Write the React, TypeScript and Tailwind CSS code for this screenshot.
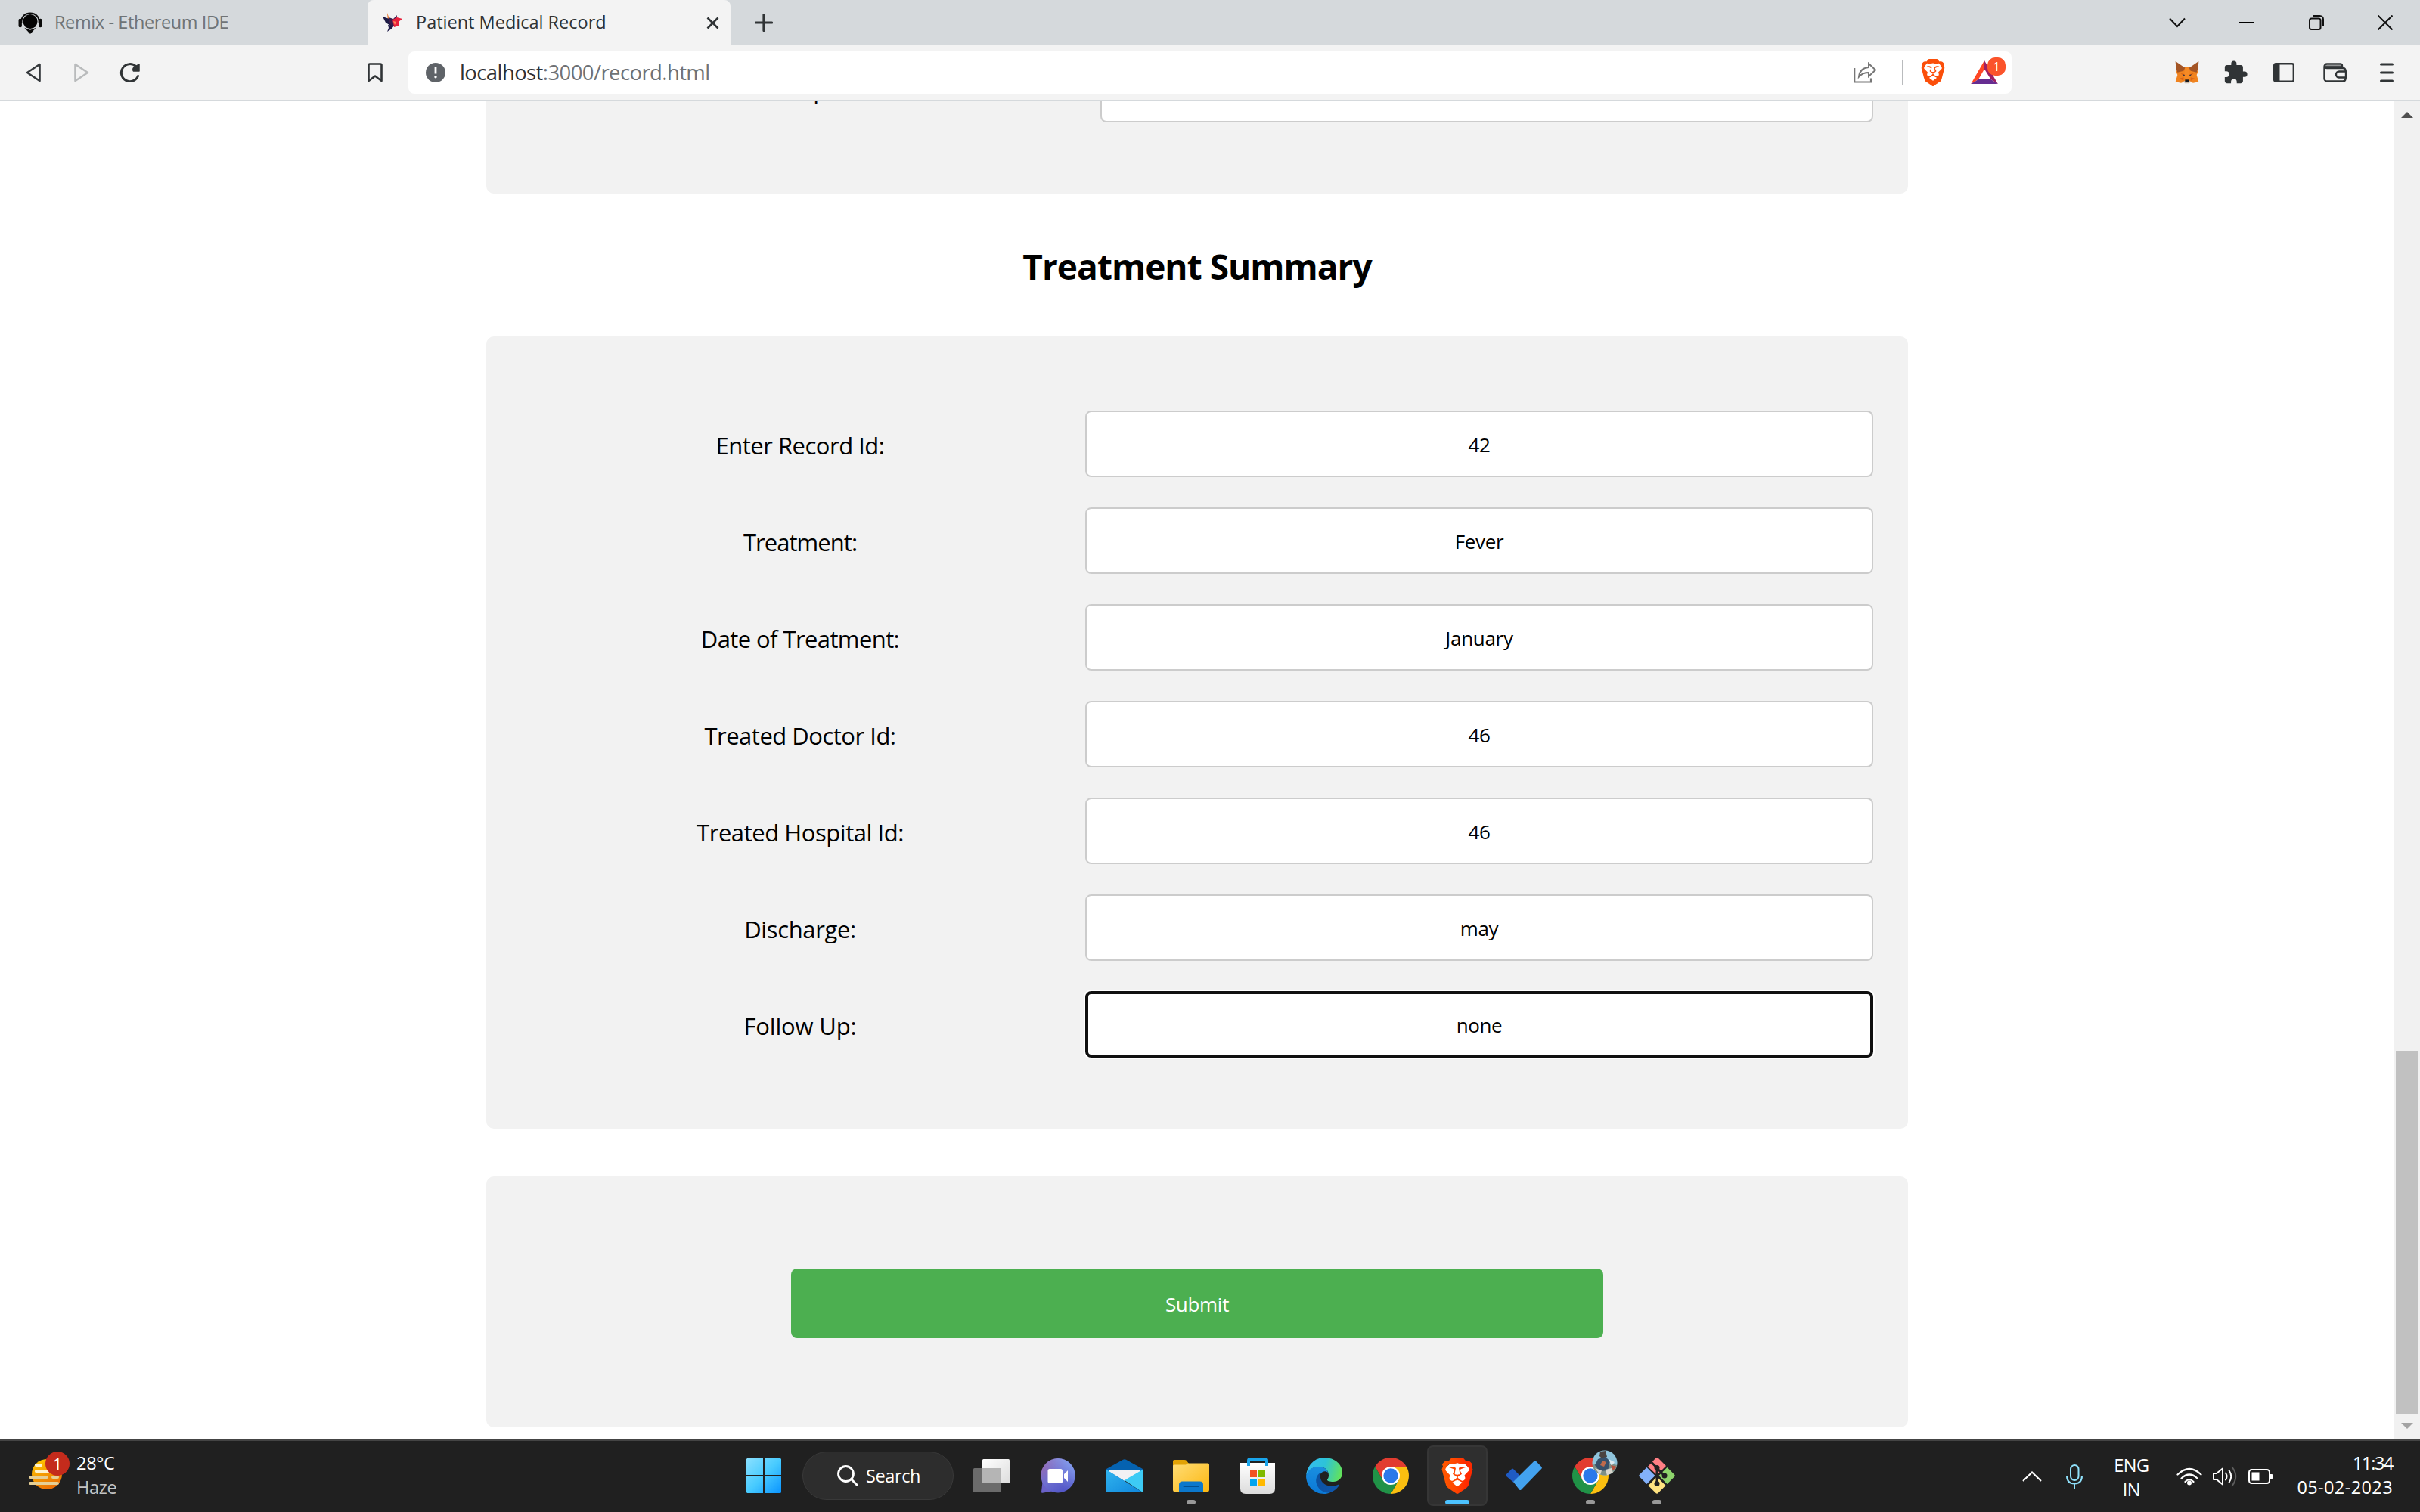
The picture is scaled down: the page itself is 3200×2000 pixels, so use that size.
import type { ReactNode } from "react";
import { SiBrave } from "react-icons/si";
import { MdExtension } from "react-icons/md";

type Field = { label: string; value: string; track: string; focused?: boolean };

const fields: Field[] = [
  { label: "Enter Record Id:", value: "42", track: "tracking-[-0.5px]" },
  { label: "Treatment:", value: "Fever", track: "tracking-[-0.95px]" },
  { label: "Date of Treatment:", value: "January", track: "tracking-[-0.6px]" },
  { label: "Treated Doctor Id:", value: "46", track: "tracking-[-0.5px]" },
  { label: "Treated Hospital Id:", value: "46", track: "tracking-[-0.45px]" },
  { label: "Discharge:", value: "may", track: "tracking-[-0.35px]" },
  { label: "Follow Up:", value: "none", track: "tracking-[-0.15px]", focused: true },
];

/* ---------- tab strip ---------- */

function RemixLogo() {
  return (
    <svg viewBox="0 0 32 30" className="h-[29px] w-8">
      <path d="M4 15V13C4 6 9 1.5 16 1.5S28 6 28 13v2" fill="none" stroke="#0b0b0b" strokeWidth="2" />
      <rect x="0" y="9" width="4.5" height="12" rx="2" fill="#0b0b0b" />
      <rect x="27.5" y="9" width="4.5" height="12" rx="2" fill="#0b0b0b" />
      <circle cx="16" cy="13" r="9.8" fill="#050505" />
      <path d="M8 21.500l8 3 8-3-8 8.500z" fill="#0b0b0b" />
    </svg>
  );
}

function BirdLogo() {
  return (
    <svg viewBox="0 0 26 26" className="h-[26px] w-[26px]">
      <path d="M6 0l3 8-2 3z" fill="#e8762d" />
      <path d="M0 5l12 4 6 8-6 1-8-5z" fill="#1d1b45" />
      <path d="M8 6l6 2 5-5-1 12-6 3-4-6z" fill="#3a1d4e" />
      <path d="M13 9l6-3 7 2-5 4 1 5-7 2z" fill="#e8213c" />
      <path d="M7 16l8 1-3 4-6 4 2-5z" fill="#201c4a" />
      <path d="M14 11l4 1-2 4z" fill="#ff8a5c" />
    </svg>
  );
}

function TabStrip() {
  return (
    <div className="flex h-[60px] items-stretch bg-[#d5d9dc]">
      <div className="flex w-[486px] items-center pl-6">
        <RemixLogo />
        <span className="ml-4 pb-px text-[23.5px] tracking-[-0.4px] text-[#6f7477]">Remix - Ethereum IDE</span>
      </div>
      <div className="flex w-[480px] items-center rounded-t-lg bg-[#f3f3f3] pl-5">
        <BirdLogo />
        <span className="ml-[18px] pb-px text-[23.5px] text-[#2f3336]">Patient Medical Record</span>
        <svg viewBox="0 0 17 17" className="mr-[15px] ml-auto size-[17px]">
          <path d="M1.5 1.5l14 14M15.500 1.500l-14 14" stroke="#303436" strokeWidth="2.600" />
        </svg>
      </div>
      <svg viewBox="0 0 24 24" className="ml-8 size-6 self-center">
        <path d="M12 1.500v21M1.500 12h21" stroke="#303436" strokeWidth="3.200" strokeLinecap="round" />
      </svg>
      <div className="mr-9 ml-auto flex items-center gap-[71.5px]">
        <svg viewBox="0 0 22 14" className="h-[14px] w-[22px]">
          <path d="M1 1.500l10 10.500 10-10.500" fill="none" stroke="#111" strokeWidth="2" />
        </svg>
        <svg viewBox="0 0 20 20" className="size-5">
          <path d="M0 10h20" stroke="#000" strokeWidth="2" />
        </svg>
        <svg viewBox="0 0 20 20" className="size-5">
          <rect x="1" y="4.500" width="14.500" height="14.500" rx="2.500" fill="none" stroke="#111" strokeWidth="2" />
          <path d="M5 1h9.500a4.500 4.500 0 0 1 4.500 4.500V15" fill="none" stroke="#111" strokeWidth="2" />
        </svg>
        <svg viewBox="0 0 20 20" className="size-5">
          <path d="M0.500 0.500l19 19M19.500 0.500l-19 19" stroke="#111" strokeWidth="2" />
        </svg>
      </div>
    </div>
  );
}

/* ---------- toolbar ---------- */

function BraveLion({ className }: { className: string }) {
  return (
    <svg viewBox="0 0 24 24" className={className}>
      <defs>
        <linearGradient id="brave" x1="0" y1="0" x2="1" y2="0">
          <stop offset="0.1" stopColor="#ff5500" />
          <stop offset="0.45" stopColor="#ff4500" />
          <stop offset="0.8" stopColor="#ff2a00" />
        </linearGradient>
      </defs>
      <path d="M3.800 7L7 4.300l5-.8 5 .8L20.200 7l-.7 3-2 6L12 20l-5.500-4-2-6z" fill="#fff" />
      <SiBrave size={24} fill="url(#brave)" />
    </svg>
  );
}

function ShieldsIcon() {
  return (
    <svg viewBox="0 0 24 24" className="ml-[21px] size-9">
      <path d="M3.800 7L7 4.300l5-.8 5 .8L20.200 7l-.7 3-2 6L12 20l-5.500-4-2-6z" fill="#fff" />
      <SiBrave size={24} color="#fb4f0a" />
    </svg>
  );
}

function MetaMaskFox() {
  return (
    <svg viewBox="0 0 96 90" className="h-[30px] w-8">
      <path d="M12 30l24-6h24l24 6 8 12-6 12 8 28-22 4-12-4H36l-12 4-22-4 8-28-6-12z" fill="#f0831f" />
      <path d="M2 0l38 26-6 12-24 6-6-16zM94 0L56 26l6 12 24 6 6-16z" fill="#a35424" />
      <path d="M40 27h16l4 36-12 12-12-12z" fill="#f58a25" />
      <path d="M22 48l16 4v8zM74 48l-16 4v8z" fill="#cf5a17" />
      <path d="M30 52l9 3-3 4zM66 52l-9 3 3 4z" fill="#233447" />
      <path d="M18 68l16-4v14zM78 68l-16-4v14z" fill="#da6518" />
      <path d="M34 78h28l-5 10H39z" fill="#c8b8a8" />
      <path d="M40 73h16v9H40z" fill="#15181d" />
    </svg>
  );
}

function Toolbar() {
  return (
    <div className="flex h-[74px] items-center border-b-2 border-[#d5d9dc] bg-[#f3f3f3]">
      <svg viewBox="0 0 20 26" className="ml-[34px] h-[26px] w-5">
        <path d="M18.500 2v22L2 13z" fill="none" stroke="#35393c" strokeWidth="2.600" strokeLinejoin="round" />
      </svg>
      <svg viewBox="0 0 20 26" className="ml-[44px] h-[26px] w-5">
        <path d="M1.500 2v22L18 13z" fill="none" stroke="#b9bbbc" strokeWidth="2.600" strokeLinejoin="round" />
      </svg>
      <svg viewBox="0 0 28 26" className="ml-10 h-[26px] w-7">
        <path d="M24.500 17.500A11.500 11.500 0 1 1 22 5" fill="none" stroke="#303436" strokeWidth="3" strokeLinecap="round" />
        <path d="M26 2v9h-7.500c-1.500-2-.5-5 1.500-5.500z" fill="#303436" stroke="#303436" strokeWidth="1.500" strokeLinejoin="round" />
      </svg>
      <svg viewBox="0 0 20 26" className="ml-[300px] h-[26px] w-5">
        <path d="M1.500 3q0-1.500 1.500-1.500h14q1.500 0 1.500 1.500v21L10 17.500 1.500 24z" fill="none" stroke="#303436" strokeWidth="2.600" strokeLinejoin="round" />
      </svg>
      <div className="ml-[34px] flex h-14 w-[2120px] items-center rounded-lg bg-white pl-[23px]">
        <svg viewBox="0 0 26 26" className="size-[26px]">
          <circle cx="13" cy="13" r="13" fill="#5f6368" />
          <path d="M13 6v8.500" stroke="#fff" strokeWidth="2.800" />
          <circle cx="13" cy="18.800" r="1.700" fill="#fff" />
        </svg>
        <span className="ml-[19px] text-[27.5px] tracking-[-0.6px] text-[#6f7276]">
          <span className="text-[#303134]">localhost</span>:3000/record.html
        </span>
        <svg viewBox="0 0 30 28" className="mr-[34px] ml-auto h-7 w-[30px]">
          <path d="M1.200 8v18.500H23v-5" fill="none" stroke="#777" strokeWidth="2.200" />
          <path d="M20 2l9 8.500-9 8.500v-5c-6 0-9.500 1.500-13 5.500.8-7 5-12 13-12.500z" fill="none" stroke="#777" strokeWidth="2" />
        </svg>
        <div className="h-8 w-0.5 bg-[#b9bbbd]" />
        <ShieldsIcon />
        <div className="relative mr-2 ml-8 h-8 w-[46px]">
          <svg viewBox="0 0 108 94" className="h-[31px] w-9">
            <path d="M54 0L0 94l30-18 24-42z" fill="#ff4724" />
            <path d="M54 0l54 94-28-18-26-42z" fill="#9e1f63" />
            <path d="M0 94h108L80 76H30z" fill="#662d91" />
          </svg>
          <span className="absolute -top-1 left-[22px] flex h-6 w-6 items-center justify-center rounded-[10px] bg-[#fb542b] pb-px text-[16px] text-white">
            1
          </span>
        </div>
      </div>
      <div className="ml-[216px] flex items-center">
        <MetaMaskFox />
        <MdExtension className="ml-[31px] size-[34px] text-[#303436]" />
        <svg viewBox="0 0 28 26" className="ml-[33px] h-[26px] w-7">
          <rect x="1.200" y="1.200" width="25.600" height="23.600" rx="2" fill="none" stroke="#303436" strokeWidth="2.400" />
          <path d="M1 1h7.500v24H1z" fill="#303436" />
        </svg>
        <svg viewBox="0 0 32 26" className="ml-[38px] h-[26px] w-8">
          <path d="M25 7V4q0-2.500-2.500-2.500H5A3.500 3.500 0 0 0 1.500 5v16A3.500 3.500 0 0 0 5 24.500h21q3.500 0 3.500-3.500V10.500Q29.500 7 26 7H5Q2 7 1.500 4.500" fill="none" stroke="#303436" strokeWidth="2.400" />
          <path d="M30 11.500h-9a4 4 0 0 0 0 8h9z" fill="#f3f3f3" stroke="#303436" strokeWidth="2.400" />
          <path d="M3 4.200h20" stroke="#303436" strokeWidth="1.400" />
        </svg>
        <svg viewBox="0 0 18 26" className="ml-[43px] h-[26px] w-[18px]">
          <path d="M1.500 2h15M1.500 13h15M1.500 24h15" stroke="#303436" strokeWidth="3" strokeLinecap="round" />
        </svg>
      </div>
    </div>
  );
}

/* ---------- page ---------- */

function FormRow({ field }: { field: Field }) {
  return (
    <div className="flex h-[88px] shrink-0 items-center">
      <label className={`flex-1 pt-[5px] text-center text-[31px] text-black ${field.track}`}>{field.label}</label>
      <div
        className={
          field.focused
            ? "flex h-[88px] w-[1042px] items-center justify-center rounded-lg border-4 border-[#101010] bg-white pt-0.5 text-[26px] tracking-[-0.4px] text-black ring-2 ring-white"
            : "flex h-[88px] w-[1042px] items-center justify-center rounded-lg border-2 border-[#ccc] bg-white pt-0.5 text-[26px] tracking-[-0.3px] text-black"
        }
      >
        {field.value}
      </div>
    </div>
  );
}

function Page() {
  return (
    <div className="flex h-[1770px] bg-white">
      <main className="flex w-[3166px] flex-col items-center overflow-hidden">
        <section className="flex h-[122px] w-[1880px] flex-col justify-end overflow-hidden rounded-b-[10px] bg-[#f2f2f2] pr-[46px] pb-[94px] pl-[38px]">
          <div className="flex h-[88px] shrink-0 items-center">
            <span className="flex-1 pt-0.5 text-center text-[31px] tracking-[-0.5px] text-black">Prescription:</span>
            <div className="h-[88px] w-[1022px] rounded-lg border-2 border-[#ccc] bg-white" />
          </div>
        </section>
        <h2 className="flex h-[189px] items-center pt-1 text-[46px] font-bold tracking-[-0.95px] text-black">
          Treatment Summary
        </h2>
        <section className="flex h-[1048px] w-[1880px] flex-col gap-10 rounded-[10px] bg-[#f2f2f2] pt-[98px] pr-[46px] pl-[38px]">
          {fields.map((f) => (
            <FormRow key={f.label} field={f} />
          ))}
        </section>
        <section className="mt-[63px] flex h-[332px] w-[1880px] justify-center rounded-[10px] bg-[#f2f2f2] pt-[122px]">
          <button className="h-[92px] w-[1074px] rounded-lg bg-[#4caf50] pt-0.5 text-[26px] tracking-[-0.3px] text-white">
            Submit
          </button>
        </section>
      </main>
      <div className="flex w-[34px] flex-col items-center bg-[#f1f1f1]">
        <svg viewBox="0 0 16 8" className="mt-[14px] h-2 w-4">
          <path d="M0 8L8 0l8 8z" fill="#505050" />
        </svg>
        <div className="mt-auto h-[480px] w-[30px] bg-[#c1c1c1]" />
        <svg viewBox="0 0 16 8" className="mt-3 mb-[14px] h-2 w-4">
          <path d="M0 0l8 8 8-8z" fill="#a3a3a3" />
        </svg>
      </div>
    </div>
  );
}

/* ---------- taskbar ---------- */

function WindowsLogo() {
  return (
    <svg viewBox="0 0 46 46" className="size-[46px]">
      <defs>
        <linearGradient id="win" x1="0" y1="0" x2="46" y2="46" gradientUnits="userSpaceOnUse">
          <stop offset="0" stopColor="#8ae0ff" />
          <stop offset="0.5" stopColor="#48cbff" />
          <stop offset="1" stopColor="#0a94ff" />
        </linearGradient>
      </defs>
      <path d="M1 0h21v22H0V1zM24 0h21l1 1v21H24zM0 24h22v22H1l-1-1zM24 24h22v21l-1 1H24z" fill="url(#win)" />
    </svg>
  );
}

function TaskView() {
  return (
    <svg viewBox="0 0 48 44" className="h-11 w-12">
      <defs>
        <linearGradient id="tv" x1="0" y1="0" x2="1" y2="1">
          <stop offset="0" stopColor="#fff" />
          <stop offset="1" stopColor="#ddd" />
        </linearGradient>
      </defs>
      <rect x="12" y="0" width="36" height="32" rx="1.500" fill="url(#tv)" />
      <rect x="0" y="12" width="36" height="32" rx="1.500" fill="#6b6b6b" />
      <path d="M12 12h24v20H12z" fill="#b5b5b5" />
    </svg>
  );
}

function ChatIcon() {
  return (
    <svg viewBox="0 0 46 46" className="size-[46px]">
      <defs>
        <linearGradient id="chat" x1="0.1" y1="0.1" x2="0.7" y2="0.9">
          <stop offset="0" stopColor="#9a6bb0" />
          <stop offset="0.5" stopColor="#6f6fd0" />
          <stop offset="1" stopColor="#5458c8" />
        </linearGradient>
        <linearGradient id="chatR" x1="0.3" y1="0.8" x2="1" y2="0.1">
          <stop offset="0.2" stopColor="#7c8be8" stopOpacity="0" />
          <stop offset="1" stopColor="#86a8f2" />
        </linearGradient>
      </defs>
      <path d="M2.500 31L1 44.500q0 1.500 1.500 1.200L15 43.500z" fill="#6a62c8" />
      <circle cx="23" cy="22.700" r="22.700" fill="url(#chat)" />
      <circle cx="23" cy="22.700" r="22.700" fill="url(#chatR)" />
      <rect x="9.500" y="14" width="19.500" height="19" rx="2.500" fill="#fff" />
      <path d="M31 21l5-5v15l-5-5z" fill="#fff" />
    </svg>
  );
}

function MailIcon() {
  return (
    <svg viewBox="0 0 48 44" className="h-11 w-12">
      <defs>
        <linearGradient id="mail" x1="0" y1="0" x2="1" y2="1">
          <stop offset="0" stopColor="#31b4ee" />
          <stop offset="1" stopColor="#0f86dc" />
        </linearGradient>
      </defs>
      <path d="M0 13L22 0.800q2-1.200 4 0L48 13v16H0z" fill="#0562b0" />
      <path d="M4 14h40v3L24 29 4 17z" fill="#f1f1f4" />
      <path d="M48 14v30L24 28z" fill="#3dcbf5" />
      <path d="M0 14l48 30H0z" fill="url(#mail)" />
    </svg>
  );
}

function ExplorerIcon() {
  return (
    <svg viewBox="0 0 48 42" className="h-[42px] w-12">
      <defs>
        <linearGradient id="fold" x1="0" y1="0" x2="1" y2="1">
          <stop offset="0" stopColor="#ffdd76" />
          <stop offset="1" stopColor="#fcb711" />
        </linearGradient>
      </defs>
      <path d="M0 2q0-2 2-2h13q2 0 3 1l3 4v6H0z" fill="#e2a205" />
      <path d="M0 8q0-1.500 1.500-1.500H17L20 4.500h26q2 0 2 2V40q0 2-2 2H2q-2 0-2-2z" fill="url(#fold)" />
      <path d="M8 42V33q0-4.500 4.500-4.500h23Q40 28.500 40 33v9z" fill="#0c78cc" />
      <path d="M14.500 35h19" stroke="#05508f" strokeWidth="2" strokeLinecap="round" />
    </svg>
  );
}

function StoreIcon() {
  return (
    <svg viewBox="0 0 46 48" className="h-12 w-[46px]">
      <defs>
        <linearGradient id="bag" x1="0" y1="0" x2="0" y2="1">
          <stop offset="0" stopColor="#fff" />
          <stop offset="1" stopColor="#dcdcdc" />
        </linearGradient>
      </defs>
      <path d="M0 7h46v34q0 7-7 7H7q-7 0-7-7z" fill="url(#bag)" />
      <path d="M11 11V4q0-2 2-2h20q2 0 2 2v7" fill="none" stroke="#19a5ec" strokeWidth="4" />
      <path d="M13 17h9v9h-9z" fill="#f25022" />
      <path d="M24 17h9v9h-9z" fill="#7fba00" />
      <path d="M13 28h9v9h-9z" fill="#00a4ef" />
      <path d="M24 28h9v9h-9z" fill="#ffb900" />
    </svg>
  );
}

function EdgeIcon() {
  return (
    <svg viewBox="0 0 48 48" className="size-12">
      <defs>
        <linearGradient id="edgeTop" x1="0" y1="0.3" x2="1" y2="0.5">
          <stop offset="0" stopColor="#35bdf1" />
          <stop offset="0.5" stopColor="#2dc3d8" />
          <stop offset="1" stopColor="#62e25c" />
        </linearGradient>
        <linearGradient id="edgeBody" x1="0.4" y1="0" x2="0.3" y2="1">
          <stop offset="0" stopColor="#1a8fe0" />
          <stop offset="1" stopColor="#0a78d6" />
        </linearGradient>
        <linearGradient id="edgeDark" x1="0" y1="0" x2="1" y2="1">
          <stop offset="0" stopColor="#0b4f9c" />
          <stop offset="1" stopColor="#0f58b0" />
        </linearGradient>
      </defs>
      <path d="M0 24C2 9 12 0 24 0c14 0 24 9 24 20 0 8-6 12-12 12-5 0-8-1-8-2.500 0-1 2-2 2-6C30 17 25 12 17 12 9 12 2 17 0 24z" fill="url(#edgeTop)" />
      <path d="M0 24C2 16 9 12 17 12c7 0 11 4 12 8-2-2-5-2-7-1-4 2-6 8-4 15 2 8 10 12 14 12-3 1.500-5 2-8 2C10 48 0 37 0 24z" fill="url(#edgeBody)" />
      <path d="M19 20c-5 3-7 9-5 15 3 9 12 13 18 11 6-2 9-5 11.500-9 .5-1-.5-1.500-1.500-1-9 4-21 1-23-9-.500-3-.500-5 0-7z" fill="url(#edgeDark)" />
    </svg>
  );
}

function ChromeIcon() {
  const wedge = "M44.780 12A24 24 0 0 0 3.220 12L13.600 30 24 12z";
  return (
    <svg viewBox="0 0 48 48" className="size-12">
      <path d={wedge} fill="#e23c30" />
      <path d={wedge} fill="#fbbf10" transform="rotate(120 24 24)" />
      <path d={wedge} fill="#209247" transform="rotate(240 24 24)" />
      <circle cx="24" cy="24" r="12" fill="#fff" />
      <circle cx="24" cy="24" r="9.700" fill="#2b79ea" />
    </svg>
  );
}

function TodoIcon() {
  return (
    <svg viewBox="0 0 48 40" className="h-10 w-12">
      <path d="M0.600 18.600L8 11q1-1 2 0l9 9-9 8.500-9.400-8q-.8-1 0-1.900z" fill="#1f5bc4" />
      <path d="M10 28L37.500 0.800q1.300-1.200 2.600 0l7.300 7.500q1 1.200 0 2.400L20.500 38.500q-1.200 1-2.400 0z" fill="#43a2ef" />
    </svg>
  );
}

function GitIcon() {
  return (
    <svg viewBox="0 0 48 48" className="size-12">
      <path d="M24 0q1 0 2 1l10 10-12 12L12 12 22 1q1-1 2-1z" fill="#ff7f84" />
      <path d="M37.500 13l9.500 9.500q1.500 1.500 0 3L37.500 35 26.500 24z" fill="#8ed46c" />
      <path d="M10.500 13l11 11-11 11L1 25.500q-1.500-1.500 0-3z" fill="#83b1fb" />
      <path d="M24 25.500l11.500 11.500-10 10q-1.500 1.500-3 0l-10-10z" fill="#fee280" />
      <path d="M17 6.500l7 7V35M24 14l10 10" fill="none" stroke="#202020" strokeWidth="3" />
      <circle cx="24" cy="13.500" r="3.500" fill="#202020" />
      <circle cx="34" cy="24" r="3.500" fill="#202020" />
      <circle cx="24" cy="34.500" r="3.500" fill="#202020" />
    </svg>
  );
}

function Avatar() {
  return (
    <svg viewBox="0 0 34 34" className="absolute -top-2.5 left-[46px] size-[34px]">
      <defs>
        <clipPath id="av">
          <circle cx="17" cy="17" r="16.500" />
        </clipPath>
      </defs>
      <g clipPath="url(#av)">
        <path d="M0 0h34v34H0z" fill="#8fc4dc" />
        <path d="M0 20l14-4 20 4v14H0z" fill="#7d8f86" />
        <path d="M11 2l7-1 2 8-6 3-4-4z" fill="#4b4340" />
        <path d="M8 12l10-3 6 6-3 12-11 1-6-8z" fill="#37506b" />
        <path d="M14 14l5 2-3 6-5-2z" fill="#c06a4c" />
        <path d="M22 12l8 4-4 5z" fill="#dfe9ee" />
        <path d="M4 24l9 3-2 6zM18 26l8-2 2 6-8 4z" fill="#d8d6cd" />
        <path d="M25 20l8 2-5 5z" fill="#b8503c" />
      </g>
    </svg>
  );
}

function Slot({ children, dot, active }: { children: ReactNode; dot?: boolean; active?: boolean }) {
  return (
    <div className="relative flex h-20 w-[88px] items-center justify-center">
      {active && (
        <div className="absolute inset-x-1 inset-y-0 flex items-end justify-center rounded-lg border-2 border-[#363636] bg-[#2f2f2f]">
          <div className="h-1.5 w-8 rounded-full bg-[#4cc2ff]" />
        </div>
      )}
      <div className="relative">{children}</div>
      {dot && <div className="absolute bottom-0.5 left-[38px] h-1.5 w-3 rounded-full bg-[#999]" />}
    </div>
  );
}

function Weather() {
  return (
    <div className="flex items-start">
      <div className="relative mt-[3px] h-[52px] w-[63px]">
        <svg viewBox="0 0 44 42" className="absolute top-2 left-0 h-[42px] w-11">
          <defs>
            <linearGradient id="sun" x1="0.2" y1="0" x2="0.7" y2="1">
              <stop offset="0" stopColor="#ffc800" />
              <stop offset="1" stopColor="#ea6a05" />
            </linearGradient>
          </defs>
          <circle cx="24" cy="20" r="20" fill="url(#sun)" />
          <path d="M10 8h6M10 16h16M2 24h22M32 24h6M2 32h36" stroke="#e6cf95" strokeWidth="4" strokeLinecap="round" />
          <path d="M10 8h6M10 16h16" stroke="#fff3cc" strokeWidth="4" strokeLinecap="round" />
        </svg>
        <span className="absolute -top-0.5 left-[22px] flex size-8 items-center justify-center rounded-full bg-[#c42b1c] text-[22px] text-white">
          1
        </span>
      </div>
      <div className="text-[23.5px] leading-8 tracking-[-0.3px]">
        <div className="text-white">28°C</div>
        <div className="text-[#c3c3c3]">Haze</div>
      </div>
    </div>
  );
}

function Tray() {
  return (
    <div className="mr-9 ml-auto flex items-center text-[23.5px] leading-8 text-white">
      <svg viewBox="0 0 26 14" className="h-[14px] w-[26px]">
        <path d="M1 13L13 1.500 25 13" fill="none" stroke="#fff" strokeWidth="2" />
      </svg>
      <svg viewBox="0 0 22 32" className="ml-8 h-8 w-[22px]">
        <rect x="6" y="1" width="10.500" height="20" rx="5.250" fill="none" stroke="#8fe0fa" strokeWidth="2" />
        <path d="M1 15q0 10.500 10 10.500T21 15M11 26v6" fill="none" stroke="#8fe0fa" strokeWidth="2" />
      </svg>
      <div className="ml-[40px] w-12 pt-0.5 text-center tracking-[-0.5px]">
        <div>ENG</div>
        <div>IN</div>
      </div>
      <svg viewBox="0 0 34 24" className="ml-[36px] h-6 w-[34px]">
        <path d="M1.500 9.500q15.500-15 31 0M6.500 14.500q10.500-10 21 0M11.500 19q5.500-5.500 11 0" fill="none" stroke="#fff" strokeWidth="2.200" strokeLinecap="round" />
        <circle cx="17" cy="20.500" r="3" fill="#fff" />
      </svg>
      <svg viewBox="0 0 32 28" className="ml-3.5 h-7 w-8">
        <path d="M1 10h4l8-6.500v21L5 18H1z" fill="none" stroke="#fff" strokeWidth="2" strokeLinejoin="round" />
        <path d="M17 9.500q3 4.500 0 9M21.500 6q5.500 8 0 16" fill="none" stroke="#fff" strokeWidth="2" strokeLinecap="round" />
        <path d="M25.500 1.500q9.500 12.500 0 25" fill="none" stroke="#5c5c5c" strokeWidth="2" strokeLinecap="round" />
      </svg>
      <svg viewBox="0 0 33 20" className="ml-[15px] h-5 w-[33px]">
        <rect x="1" y="1" width="27" height="18" rx="3.500" fill="none" stroke="#fff" strokeWidth="2" />
        <path d="M29 7h2q2 0 2 1.500v3Q33 13 31 13h-2z" fill="#fff" />
        <rect x="4.500" y="4.500" width="10" height="11" fill="#fff" />
      </svg>
      <div className="ml-[31px] pb-[3px] text-right">
        <div className="tracking-[-1.4px]">11:34</div>
        <div className="tracking-[0.4px]">05-02-2023</div>
      </div>
    </div>
  );
}

function Taskbar() {
  return (
    <div className="flex h-24 items-start border-t-2 border-[#444] bg-[#202020]">
      <div className="mt-[13px] w-[966px] pl-[38px]">
        <Weather />
      </div>
      <div className="mt-1.5 flex items-center">
        <Slot>
          <WindowsLogo />
        </Slot>
        <div className="mr-1.5 ml-[7px] flex h-16 w-[200px] items-center rounded-full border border-[#393939] bg-[#2d2d2d] pl-[45px]">
          <svg viewBox="0 0 28 28" className="size-7">
            <circle cx="11.500" cy="11.500" r="10" fill="none" stroke="#fff" strokeWidth="2.800" />
            <path d="M18.500 18.500l8 8" stroke="#fff" strokeWidth="3" strokeLinecap="round" />
          </svg>
          <span className="ml-2.5 pt-0.5 text-[23.5px] tracking-[-0.4px] text-white">Search</span>
        </div>
        <Slot>
          <TaskView />
        </Slot>
        <Slot>
          <ChatIcon />
        </Slot>
        <Slot>
          <MailIcon />
        </Slot>
        <Slot dot>
          <ExplorerIcon />
        </Slot>
        <Slot>
          <StoreIcon />
        </Slot>
        <Slot>
          <EdgeIcon />
        </Slot>
        <Slot>
          <ChromeIcon />
        </Slot>
        <Slot active>
          <BraveLion className="size-12" />
        </Slot>
        <Slot>
          <TodoIcon />
        </Slot>
        <div className="relative">
          <Slot dot>
            <ChromeIcon />
          </Slot>
          <div className="absolute top-4 left-0">
            <Avatar />
          </div>
        </div>
        <Slot dot>
          <GitIcon />
        </Slot>
      </div>
      <div className="ml-auto flex self-start pt-[13px]">
        <Tray />
      </div>
    </div>
  );
}

export default function App() {
  return (
    <div className="flex h-[2000px] w-[3200px] flex-col overflow-hidden bg-white font-['Open_Sans','Noto_Sans',sans-serif]">
      <TabStrip />
      <Toolbar />
      <Page />
      <Taskbar />
    </div>
  );
}
